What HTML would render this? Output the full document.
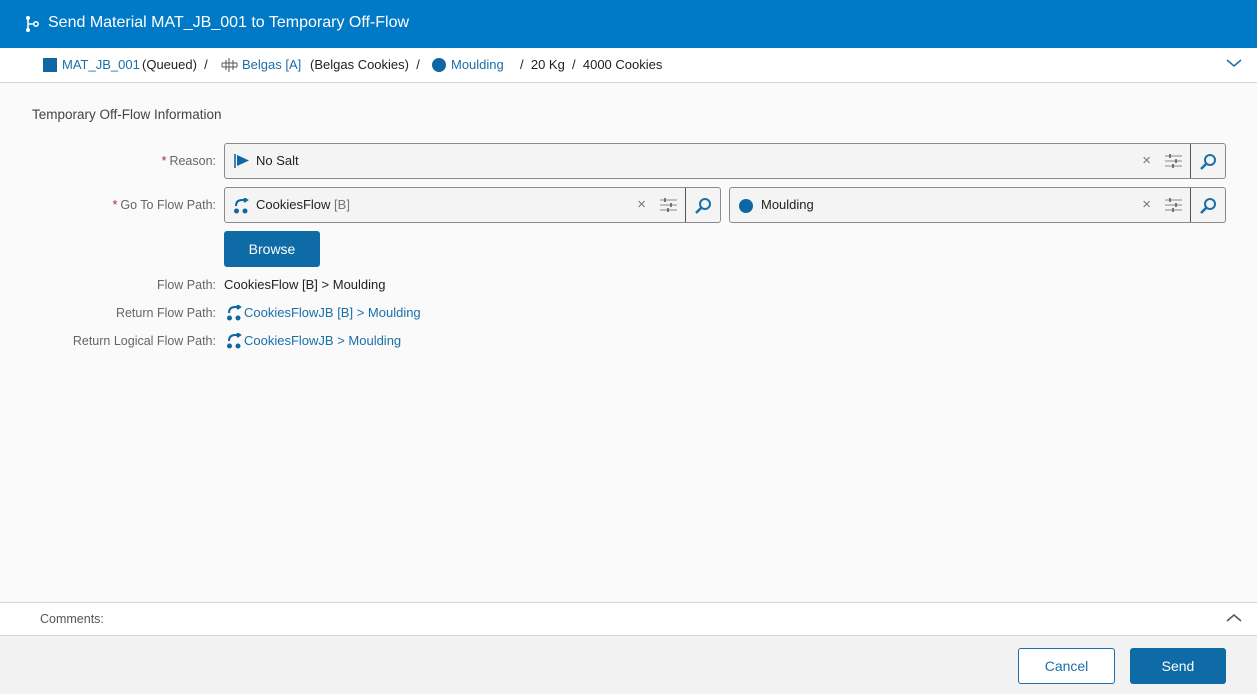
<!DOCTYPE html><html><head><style>
*{box-sizing:border-box;margin:0;padding:0}
body{width:1257px;height:694px;background:#fafafa;font-family:"Liberation Sans",sans-serif;font-size:13px;color:#222;position:relative;overflow:hidden}
.hdr{position:absolute;left:0;top:0;width:1257px;height:48px;background:#0079c7;color:#fff;font-size:16px}
.hdr span{position:absolute;left:48px;top:14px}
.bc{position:absolute;top:48px;left:0;width:1257px;height:35px;background:#fff;border-bottom:1px solid #d4d4d4}
.a{position:absolute;white-space:nowrap}
.lnk{color:#1a6fa8}
.lbl{position:absolute;right:1041px;color:#666;font-size:12.5px;white-space:nowrap}
.req{color:#b3262a;margin-right:3px}
.inp{position:absolute;height:36px;background:#f4f4f4;border:1px solid #8a8a8a;border-radius:3px}
.inp .t{position:absolute;left:31px;top:9px;font-size:13px}
.inp .s{position:absolute;right:0;top:0;width:35px;height:34px;border-left:1px solid #555}
.inp .x{position:absolute;top:8px;color:#777;font-size:15px}
.btn{position:absolute;border-radius:3px;font-size:14px;text-align:center}
</style></head><body>
<div class="hdr"><svg style="position:absolute;left:24px;top:15px" width="16" height="18" viewBox="0 0 16 18"><circle cx="4" cy="3" r="2" fill="#fff"/><circle cx="4" cy="15" r="2" fill="#fff"/><circle cx="12" cy="9" r="2.2" fill="none" stroke="#fff" stroke-width="1.5"/><path d="M4 3V15M4 9Q6 9 10 9" stroke="#fff" stroke-width="1.6" fill="none"/></svg><span>Send Material MAT_JB_001 to Temporary Off-Flow</span></div>
<div class="bc">
<div class="a" style="left:43px;top:10px;width:14px;height:14px;background:#0e67a3"></div>
<div class="a lnk" style="left:62px;top:9px">MAT_JB_001</div>
<div class="a" style="left:142px;top:9px">(Queued)&nbsp; /</div>
<svg class="a" style="left:221px;top:10px" width="17" height="14" viewBox="0 0 17 14"><path d="M1 5H16M1 9H16M5 2V12M12 2V12M8 0V14M1 5V9M16 5V9" stroke="#555" fill="none"/></svg>
<div class="a lnk" style="left:242px;top:9px">Belgas [A]</div>
<div class="a" style="left:310px;top:9px">(Belgas Cookies)&nbsp; /</div>
<div class="a" style="left:432px;top:10px;width:14px;height:14px;border-radius:50%;background:#0e67a3"></div>
<div class="a lnk" style="left:451px;top:9px">Moulding</div>
<div class="a" style="left:520px;top:9px">/&nbsp; 20 Kg&nbsp; /&nbsp; 4000 Cookies</div>
<svg class="a" style="left:1226px;top:10px" width="16" height="10"><path d="M1 2L8 8L15 2" stroke="#1a6fa8" stroke-width="1.5" fill="none"/></svg>
</div>
<div class="a" style="left:32px;top:107px;font-size:13.5px;color:#444">Temporary Off-Flow Information</div>
<div class="lbl" style="top:154px"><span class="req">*</span>Reason:</div>
<div class="lbl" style="top:198px"><span class="req">*</span>Go To Flow Path:</div>
<div class="inp" style="left:224px;top:143px;width:1002px"><svg class="a" style="left:9px;top:10px" width="16" height="14"><path d="M1 0V14" stroke="#0e67a3" stroke-width="1.6"/><path d="M3 1L15 6.5L3 12Z" fill="#0e67a3"/></svg><div class="t">No Salt</div><div class="x" style="right:74px">×</div><svg class="a" style="right:43px;top:10px" width="17" height="14"><path d="M0 2H17M0 7H17M0 12H17" stroke="#888"/><path d="M5 0V4M11 5V9M8 10V14" stroke="#555" stroke-width="1.5"/></svg><div class="s"><svg style="position:absolute;left:9px;top:9px" width="17" height="17"><circle cx="10" cy="7" r="5" stroke="#1a6fa8" stroke-width="2" fill="none"/><path d="M7 10L1 16" stroke="#1a6fa8" stroke-width="2.5"/></svg></div></div>
<div class="inp" style="left:224px;top:187px;width:497px"><svg class="a" style="left:8px;top:10px" width="16" height="16"><path d="M3 8Q3 2 9 2H13M11 0L14 2L11 4" stroke="#0e67a3" stroke-width="2" fill="none"/><circle cx="3.5" cy="13" r="2.5" fill="#0e67a3"/><circle cx="12" cy="13" r="2.5" fill="#0e67a3"/></svg><div class="t">CookiesFlow <span style="color:#777">[B]</span></div><div class="x" style="right:74px">×</div><svg class="a" style="right:43px;top:10px" width="17" height="14"><path d="M0 2H17M0 7H17M0 12H17" stroke="#888"/><path d="M5 0V4M11 5V9M8 10V14" stroke="#555" stroke-width="1.5"/></svg><div class="s"><svg style="position:absolute;left:9px;top:9px" width="17" height="17"><circle cx="10" cy="7" r="5" stroke="#1a6fa8" stroke-width="2" fill="none"/><path d="M7 10L1 16" stroke="#1a6fa8" stroke-width="2.5"/></svg></div></div>
<div class="inp" style="left:729px;top:187px;width:497px"><div class="a" style="left:9px;top:11px;width:14px;height:14px;border-radius:50%;background:#0e67a3"></div><div class="t">Moulding</div><div class="x" style="right:74px">×</div><svg class="a" style="right:43px;top:10px" width="17" height="14"><path d="M0 2H17M0 7H17M0 12H17" stroke="#888"/><path d="M5 0V4M11 5V9M8 10V14" stroke="#555" stroke-width="1.5"/></svg><div class="s"><svg style="position:absolute;left:9px;top:9px" width="17" height="17"><circle cx="10" cy="7" r="5" stroke="#1a6fa8" stroke-width="2" fill="none"/><path d="M7 10L1 16" stroke="#1a6fa8" stroke-width="2.5"/></svg></div></div>
<div class="btn" style="left:224px;top:231px;width:96px;height:36px;background:#0e6ba6;color:#fff;line-height:36px">Browse</div>
<div class="lbl" style="top:278px">Flow Path:</div>
<div class="a" style="left:224px;top:277px">CookiesFlow [B] &gt; Moulding</div>
<div class="lbl" style="top:306px">Return Flow Path:</div>
<svg class="a" style="left:226px;top:305px" width="17" height="16"><path d="M3 8Q3 2 9 2H13M11 0L14 2L11 4" stroke="#0e67a3" stroke-width="2" fill="none"/><circle cx="3.5" cy="13" r="2.5" fill="#0e67a3"/><circle cx="12" cy="13" r="2.5" fill="#0e67a3"/></svg>
<div class="a lnk" style="left:244px;top:305px">CookiesFlowJB [B] &gt; Moulding</div>
<div class="lbl" style="top:334px">Return Logical Flow Path:</div>
<svg class="a" style="left:226px;top:333px" width="17" height="16"><path d="M3 8Q3 2 9 2H13M11 0L14 2L11 4" stroke="#0e67a3" stroke-width="2" fill="none"/><circle cx="3.5" cy="13" r="2.5" fill="#0e67a3"/><circle cx="12" cy="13" r="2.5" fill="#0e67a3"/></svg>
<div class="a lnk" style="left:244px;top:333px">CookiesFlowJB &gt; Moulding</div>
<div class="a" style="left:0;top:602px;width:1257px;height:34px;background:#fff;border-top:1px solid #d4d4d4;border-bottom:1px solid #d4d4d4"></div>
<div class="a" style="left:40px;top:612px;color:#555;font-size:12.5px">Comments:</div>
<svg class="a" style="left:1226px;top:613px" width="16" height="10"><path d="M1 8L8 2L15 8" stroke="#555" stroke-width="1.5" fill="none"/></svg>
<div class="a" style="left:0;top:636px;width:1257px;height:58px;background:#f2f2f2"></div>
<div class="btn" style="left:1018px;top:648px;width:97px;height:36px;border:1px solid #1a6fa8;color:#1a6fa8;background:#fff;line-height:34px">Cancel</div>
<div class="btn" style="left:1130px;top:648px;width:96px;height:36px;background:#0e6ba6;color:#fff;line-height:36px">Send</div>
</body></html>
